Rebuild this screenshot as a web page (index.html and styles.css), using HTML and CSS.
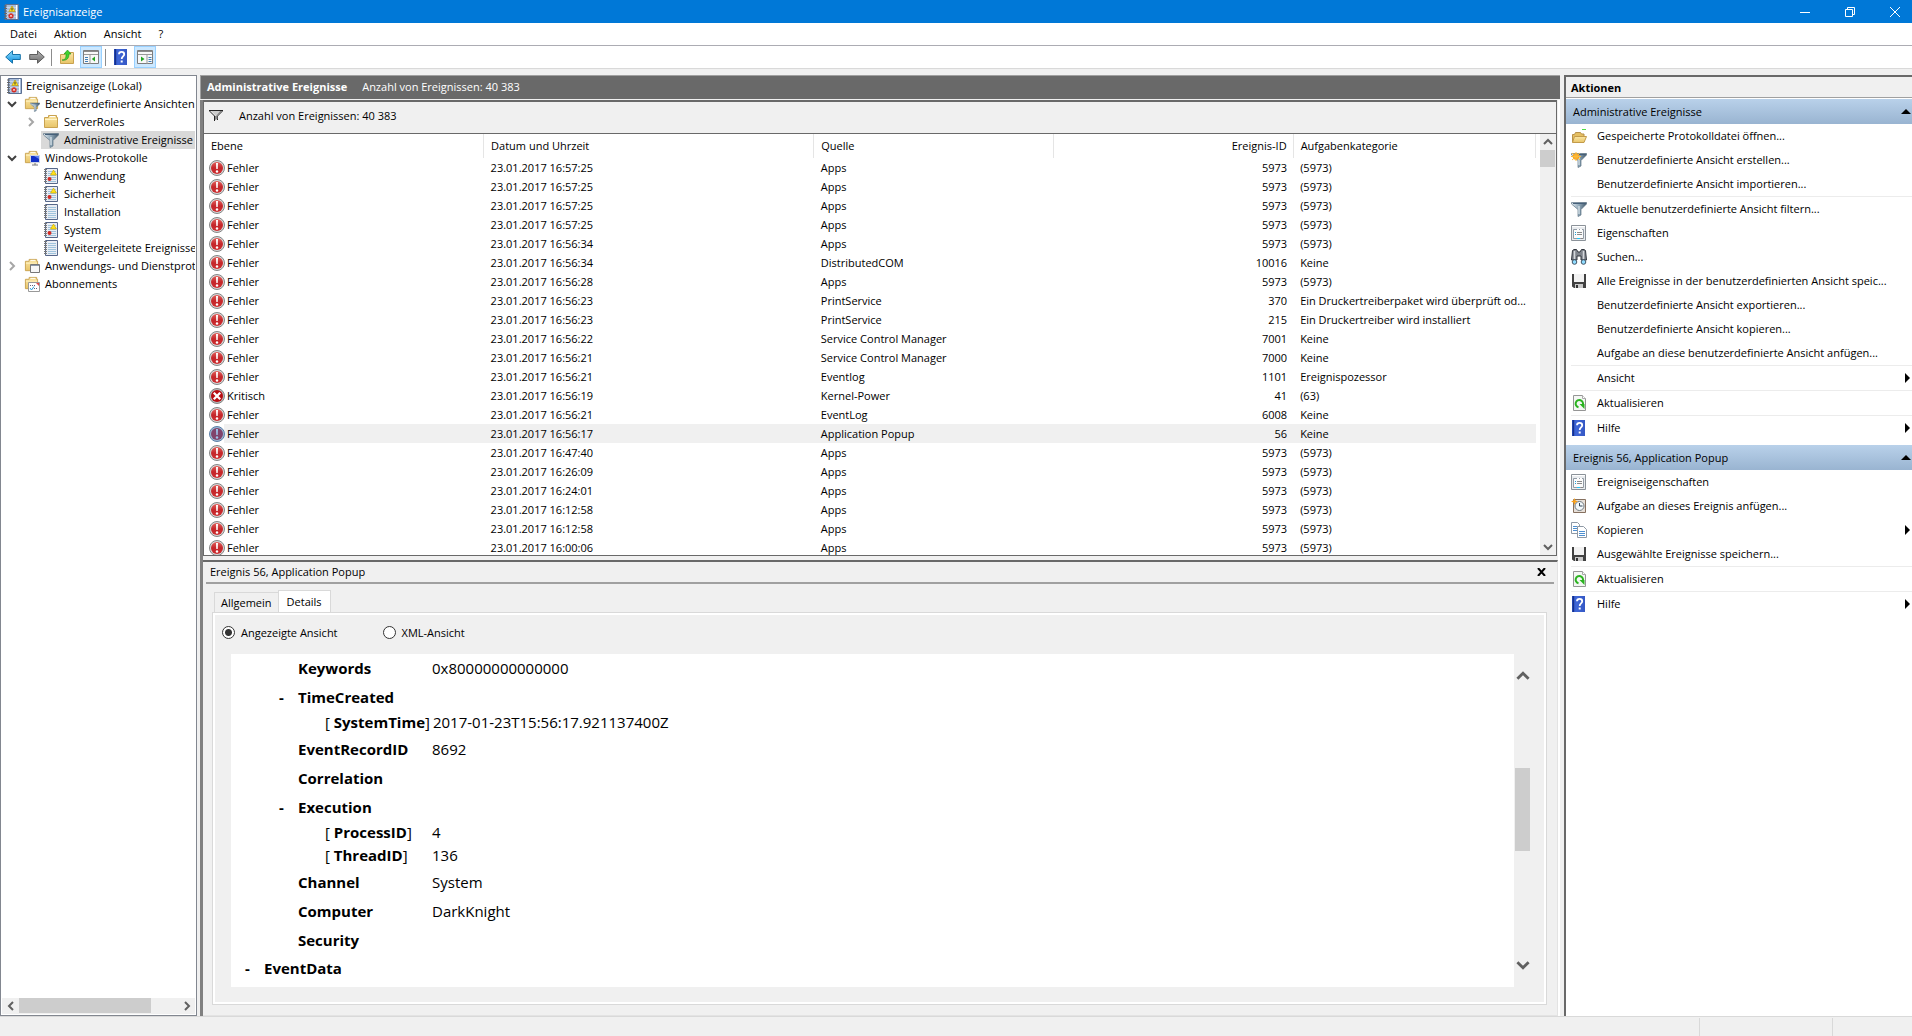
FILE: index.html
```html
<!DOCTYPE html>
<html lang="de">
<head>
	<meta charset="UTF-8">
	<title>Ereignisanzeige</title>
	<link rel="stylesheet" href="styles.css">
	<script src="events.js"></script>
</head>
<body>
	<!-- icons -->
	<svg class="defs" aria-hidden="true">
		<defs>
			<linearGradient id="g-blue" x1="0" y1="0" x2="0" y2="1"><stop offset="0" stop-color="#8fdcfb"/><stop offset="1" stop-color="#0b8ee0"/></linearGradient>
			<linearGradient id="g-grey" x1="0" y1="0" x2="0" y2="1"><stop offset="0" stop-color="#b5b5b5"/><stop offset="1" stop-color="#6e6e6e"/></linearGradient>
			<linearGradient id="g-folder" x1="0" y1="0" x2="0" y2="1"><stop offset="0" stop-color="#fbe7a6"/><stop offset="1" stop-color="#e8c468"/></linearGradient>
			<linearGradient id="g-funnel"><stop offset="0" stop-color="#dfe8ee"/><stop offset=".5" stop-color="#8fa7b8"/><stop offset="1" stop-color="#42586a"/></linearGradient>
			<linearGradient id="g-help"><stop offset="0" stop-color="#1c3fa8"/><stop offset=".3" stop-color="#3f67d8"/><stop offset="1" stop-color="#3558c4"/></linearGradient>
			<linearGradient id="g-red" x1="0" y1="0" x2="0" y2="1"><stop offset="0" stop-color="#e2605c"/><stop offset=".5" stop-color="#c4262a"/><stop offset="1" stop-color="#cf2f31"/></linearGradient>

			<symbol id="i-log" viewBox="0 0 16 16">
				<path d="M2.500 .5h12v15h-12z" fill="#e9edf4" stroke="#56678a"/>
				<path d="M5 3.500h8M5 5.500h8M5 7.500h8M5 9.500h8M5 11.500h8M5 13.500h8" stroke="#9fc3dc"/>
				<path d="M1 1.500h3M1 3.500h3M1 5.500h3M1 7.500h3M1 9.500h3M1 11.500h3M1 13.500h3" stroke="#777"/>
			</symbol>
			<symbol id="i-logx" viewBox="0 0 16 16">
				<use href="#i-log"/>
				<path d="M10.500 2l3 5h-6z" fill="#ffe21a" stroke="#c9a400" stroke-width=".6"/>
				<circle cx="6.500" cy="11" r="2" fill="#d42a22"/>
			</symbol>
			<symbol id="i-app" viewBox="0 0 16 16">
				<path d="M2.500 .5h13v15h-13z" fill="#a9bdd9" stroke="#5b6f92"/>
				<path d="M4 3.500h9M4 6.500h9M4 9.500h9M4 12.500h9" stroke="#c8d6e8"/><path d="M13.500 1v14" stroke="#fff"/>
				<path d="M1 2h3M1 4.500h3M1 7h3M1 9.500h3M1 12h3M1 14.500h3" stroke="#666"/>
				<path d="M9 2l3.200 5.500H5.800z" fill="#ffe21a" stroke="#b08f00" stroke-width=".6"/>
				<path d="M9 3.800v2.700" stroke="#333"/>
				<circle cx="8" cy="11.800" r="2.600" fill="#d42a22"/><path d="M7 10.800l2 2m0-2l-2 2" stroke="#fff" stroke-width=".8"/>
			</symbol>
			<symbol id="i-folder" viewBox="0 0 16 16">
				<path d="M1.500 3.500h4V1.500h8v2h1v10h-13z" fill="url(#g-folder)" stroke="#c9a250"/>
				<path d="M7 2.500h5" stroke="#fff"/><path d="M2 5.500h12" stroke="#fff3c4"/>
			</symbol>
			<symbol id="i-funnel" viewBox="0 0 16 16">
				<path d="M.500 1.500h15v1.500L10 8.500V14l-3 1.500v-7L.500 3z" fill="url(#g-funnel)" stroke="#5d7384" stroke-width=".7"/>
				<path d="M2 2.500h12" stroke="#46607a"/><path d="M8 5v8" stroke="#edf4f8"/>
			</symbol>
			<symbol id="i-ffilter" viewBox="0 0 16 16">
				<svg width="15" height="15" viewBox="0 0 16 16"><use href="#i-folder"/></svg>
				<svg x="6" y="6" width="10" height="10" viewBox="0 0 16 16"><use href="#i-funnel"/></svg>
			</symbol>
			<symbol id="i-fpc" viewBox="0 0 16 16">
				<svg width="15" height="15" viewBox="0 0 16 16"><use href="#i-folder"/></svg>
				<path d="M6.500 5.500h9v7h-9z" fill="#1230c8" stroke="#cfd6e6"/><path d="M10 6h5v3z" fill="#5f82f0"/><path d="M8 15h6M11 13v2" stroke="#777"/>
			</symbol>
			<symbol id="i-fwin" viewBox="0 0 16 16">
				<svg width="15" height="15" viewBox="0 0 16 16"><use href="#i-folder"/></svg>
				<path d="M6.500 6.500h9v8h-9z" fill="#f7f7f7" stroke="#777"/><path d="M7 7.500h8" stroke="#8a97a8"/>
			</symbol>
			<symbol id="i-fsub" viewBox="0 0 16 16">
				<svg width="15" height="15" viewBox="0 0 16 16"><use href="#i-folder"/></svg>
				<path d="M4.500 6.500h11v9h-11z" fill="#fff" stroke="#999"/><path d="M12 7h3v3z" fill="#e3484a"/>
				<path d="M6 9.500h1m1 0h1m1 0h1M10 12.500h1m1 0h1" stroke="#667"/><path d="M6 12l1.500 2L10 10.500" fill="none" stroke="#2aa0dc"/>
			</symbol>
			<symbol id="i-left" viewBox="0 0 16 16"><path d="M.700 8L7.500 1.800v3.700h7.800v5H7.500v3.700z" fill="url(#g-blue)" stroke="#1672a8"/></symbol>
			<symbol id="i-right" viewBox="0 0 16 16"><path d="M15.300 8L8.500 1.800v3.700H.7v5h7.800v3.700z" fill="url(#g-grey)" stroke="#5e5e5e"/></symbol>
			<symbol id="i-up" viewBox="0 0 16 16">
				<path d="M1.500 5.500h4l1-2h8v11h-13z" fill="url(#g-folder)" stroke="#c9a250"/>
				<path d="M3 11c4 0 4-3 4-6H5l3.500-4L12 5h-2c0 4-2 7-7 6z" fill="#3fd12e" stroke="#1f8f18" stroke-width=".6"/>
			</symbol>
			<symbol id="i-pane" viewBox="0 0 16 14">
				<path d="M.500 .500h15v13H.500z" fill="#f8f8f8" stroke="#7d7d7d"/><path d="M1 1.500h14" stroke="#8b8b8b"/><path d="M1 4.500h14M7 5v9" stroke="#999"/>
				<path d="M2 7.500h3M2 9.500h3M2 11.500h3" stroke="#3f7fb8"/><path d="M12 6.500v5L8.800 9z" fill="#23a523"/>
			</symbol>
			<symbol id="i-pane2" viewBox="0 0 16 14">
				<path d="M.500 .500h15v13H.500z" fill="#f8f8f8" stroke="#7d7d7d"/><path d="M1 1.500h14" stroke="#8b8b8b"/><path d="M1 4.500h14M10 5v9" stroke="#999"/>
				<path d="M11.500 7.500h3M11.500 9.500h3M11.500 11.500h3" stroke="#3f7fb8"/><path d="M4 6.500v5L7.500 9z" fill="#23a523"/>
			</symbol>
			<symbol id="i-help" viewBox="0 0 16 16">
				<path d="M1 0h13v16H1z" fill="url(#g-help)"/><path d="M2.500 0v16" stroke="#17308a"/>
				<path d="M6 5.200C6 2 11.200 2 11.200 5.200 11.200 7.500 8.700 7.400 8.700 10" fill="none" stroke="#fff" stroke-width="1.800"/><path d="M7.700 11.500h2v2h-2z" fill="#fff"/>
			</symbol>
			<symbol id="i-error" viewBox="0 0 16 16">
				<circle cx="8" cy="8" r="7.500" fill="#d8d8d8" stroke="#858585"/><circle cx="8" cy="8" r="6" fill="url(#g-red)"/>
				<path d="M7 3h2l-.3 6H7.300z" fill="#fff"/><circle cx="8" cy="11.500" r="1.200" fill="#fff"/>
			</symbol>
			<symbol id="i-errorsel" viewBox="0 0 16 16">
				<circle cx="8" cy="8" r="7.500" fill="#9db9d4" stroke="#5c7ea6"/><circle cx="8" cy="8" r="6" fill="#80436b"/>
				<path d="M7 3h2l-.3 6H7.300z" fill="#9ec4ea"/><circle cx="8" cy="11.500" r="1.200" fill="#9ec4ea"/>
			</symbol>
			<symbol id="i-critical" viewBox="0 0 16 16">
				<circle cx="8" cy="8" r="7.500" fill="#b9b9b9" stroke="#858585"/><circle cx="8" cy="8" r="6" fill="#b80d12"/>
				<path d="M4.800 4.800l6.400 6.400m0-6.400l-6.400 6.400" stroke="#fff" stroke-width="2.300"/>
			</symbol>
			<symbol id="i-open" viewBox="0 0 16 16">
				<path d="M1.500 14V6.500h2l1-2h5l1 1.500h2.500V14z" fill="#e5bf62" stroke="#b8914a"/><path d="M3.500 8.500h12L13 14.500H1.500z" fill="url(#g-folder)" stroke="#c39b4a"/><path d="M11 1.500h4" stroke="#4fdc45"/>
			</symbol>
			<symbol id="i-funnelnew" viewBox="0 0 16 16"><use href="#i-funnel"/><circle cx="5" cy="4.500" r="3.300" fill="#f9a11b"/><path d="M1 1l8 7M9 1L1 8M5 0v9M0 4.500h10" stroke="#fbbc3c"/></symbol>
			<symbol id="i-props" viewBox="0 0 16 16">
				<path d="M.500 .500h14v15H.500z" fill="#e9ecef" stroke="#8b9299"/><path d="M1 1.500h13" stroke="#fff"/><path d="M2.500 4.500h10v9h-10z" fill="#fbfbfb" stroke="#929ba5"/>
				<path d="M6 4.500h2m1 0h2" stroke="#fff"/><path d="M4 7.500h1M4 9.500h1" stroke="#23a0d8"/><path d="M6 7.500h5M6 9.500h5" stroke="#8a8a8a"/><path d="M6 13.500h3" stroke="#22c3f5"/><path d="M10 13.500h2" stroke="#888"/>
			</symbol>
			<symbol id="i-find" viewBox="0 0 16 16">
				<path d="M1.500 1.500L3 .5h2.500L7 3h2L10.500.5H13l1.500 1L15.500 11H10V7H6v4H.5z" fill="#7f848c" stroke="#33373f"/><path d="M3.500 2v8M12.500 2v8" stroke="#d5d8dc" stroke-width="1.500"/>
				<circle cx="3.500" cy="13" r="2.300" fill="#8fdcff" stroke="#456"/><circle cx="12.500" cy="13" r="2.300" fill="#8fdcff" stroke="#456"/>
			</symbol>
			<symbol id="i-save" viewBox="0 0 16 16">
				<path d="M1 1h14v14H3l-2-1.500z" fill="#414141"/><path d="M3 1h10v8H3z" fill="#f2f2f2"/><path d="M4 11h8v4H4z" fill="#c9c9c9"/><path d="M5 12h2v3H5z" fill="#333"/>
			</symbol>
			<symbol id="i-refresh" viewBox="0 0 16 16">
				<path d="M2.500 .500h9l3 3v12h-12z" fill="#f4f7f4" stroke="#959595"/><path d="M11.500 .500v3h3" fill="#fff" stroke="#aaa"/>
				<path d="M7.500 12.300A3.700 3.700 0 1 1 11.800 10" fill="none" stroke="#2bb320" stroke-width="2"/><path d="M8.500 9h5v5z" fill="#2bb320"/>
			</symbol>
			<symbol id="i-task" viewBox="0 0 16 16">
				<path d="M2.500 1.500h12v13h-12z" fill="#e6dfd8" stroke="#86705f"/><circle cx="8.500" cy="8" r="4.500" fill="#f2f8fb" stroke="#71797f"/><path d="M8.500 5v3h3" fill="none" stroke="#345"/>
				<path d="M3.500 0l1 2.500L7 3.500l-2.500 1-1 2.500-1-2.500L0 3.500l2.500-1z" fill="#f9a11b"/>
			</symbol>
			<symbol id="i-copy" viewBox="0 0 16 16">
				<path d="M.500 .500h6l2 2v9h-8z" fill="#fff" stroke="#8e99a5"/><path d="M2 4.500h4M2 6.500h4M2 8.500h4" stroke="#4d8fd0"/>
				<path d="M6.500 4.500h6l3 3v8h-9z" fill="#fff" stroke="#8e99a5"/><path d="M8 9.500h6M8 11.500h6M8 13.500h6" stroke="#4d8fd0"/>
			</symbol>
			<symbol id="i-smallfunnel" viewBox="0 0 16 16"><path d="M1 2.500h14M1.500 3l5 5v5M14.500 3l-5 5v4" fill="none" stroke="#222"/><path d="M3 3h9L8 8z" fill="#ccc"/><path d="M8 8l4-5h2L9.500 8v3L7 12V8z" fill="#888"/></symbol>
			<symbol id="i-down" viewBox="0 0 10 10"><path d="M1 3l4 4 4-4" fill="none" stroke="currentColor" stroke-width="2"/></symbol>
			<symbol id="i-next" viewBox="0 0 10 10"><path d="M3 1l4 4-4 4" fill="none" stroke="currentColor" stroke-width="2"/></symbol>
			<symbol id="i-prev" viewBox="0 0 10 10"><path d="M7 1L3 5l4 4" fill="none" stroke="currentColor" stroke-width="2"/></symbol>
			<symbol id="i-top" viewBox="0 0 10 10"><path d="M1 7l4-4 4 4" fill="none" stroke="currentColor" stroke-width="2"/></symbol>
		</defs>
	</svg>

	<header class="titlebar">
		<svg class="icon"><use href="#i-app"/></svg>
		<span class="title">Ereignisanzeige</span>
		<button aria-label="Minimieren"><svg width="10" height="10"><path d="M0 5.500h10" stroke="#fff"/></svg></button>
		<button aria-label="Verkleinern"><svg width="10" height="10" fill="none" stroke="#fff"><path d="M.5 2.500h7v7h-7zM2.500 2V.5h7v7H8"/></svg></button>
		<button aria-label="Schließen"><svg width="10" height="10"><path d="M0 0l10 10M10 0L0 10" stroke="#fff"/></svg></button>
	</header>

	<nav class="menu">
		<button>Datei</button>
		<button>Aktion</button>
		<button>Ansicht</button>
		<button>?</button>
	</nav>

	<div class="toolbar">
		<button aria-label="Zurück"><svg class="icon"><use href="#i-left"/></svg></button>
		<button aria-label="Vorwärts"><svg class="icon"><use href="#i-right"/></svg></button>
		<i class="sep"></i>
		<button aria-label="Eine Ebene höher"><svg class="icon"><use href="#i-up"/></svg></button>
		<button class="on" aria-label="Konsolenstruktur"><svg class="icon"><use href="#i-pane"/></svg></button>
		<i class="sep"></i>
		<button aria-label="Hilfe"><svg class="icon"><use href="#i-help"/></svg></button>
		<button class="on" aria-label="Aktionsbereich"><svg class="icon"><use href="#i-pane2"/></svg></button>
	</div>

	<main class="main">
		<aside class="tree">
			<ul>
				<li class="root"><svg class="icon"><use href="#i-app"/></svg>Ereignisanzeige (Lokal)</li>
				<li class="l1"><svg class="chev"><use href="#i-down"/></svg><svg class="icon"><use href="#i-ffilter"/></svg>Benutzerdefinierte Ansichten</li>
				<li class="l2"><svg class="chev closed"><use href="#i-next"/></svg><svg class="icon"><use href="#i-folder"/></svg>ServerRoles</li>
				<li class="l2 leaf selected"><svg class="icon"><use href="#i-funnel"/></svg>Administrative Ereignisse</li>
				<li class="l1"><svg class="chev"><use href="#i-down"/></svg><svg class="icon"><use href="#i-fpc"/></svg>Windows-Protokolle</li>
				<li class="l2 leaf"><svg class="icon"><use href="#i-logx"/></svg>Anwendung</li>
				<li class="l2 leaf"><svg class="icon"><use href="#i-logx"/></svg>Sicherheit</li>
				<li class="l2 leaf"><svg class="icon"><use href="#i-log"/></svg>Installation</li>
				<li class="l2 leaf"><svg class="icon"><use href="#i-logx"/></svg>System</li>
				<li class="l2 leaf"><svg class="icon"><use href="#i-log"/></svg>Weitergeleitete Ereignisse</li>
				<li class="l1"><svg class="chev closed"><use href="#i-next"/></svg><svg class="icon"><use href="#i-fwin"/></svg>Anwendungs- und Dienstprotokolle</li>
				<li class="l1 leaf"><svg class="icon"><use href="#i-fsub"/></svg>Abonnements</li>
			</ul>
			<div class="hscroll">
				<button aria-label="Nach links"><svg class="chev"><use href="#i-prev"/></svg></button>
				<div class="track"><div class="thumb"></div></div>
				<button aria-label="Nach rechts"><svg class="chev"><use href="#i-next"/></svg></button>
			</div>
		</aside>

		<section class="center">
			<h1 class="caption"><b>Administrative Ereignisse</b><span>Anzahl von Ereignissen: 40 383</span></h1>
			<div class="frame">
				<div class="list">
					<div class="filter"><svg class="icon"><use href="#i-smallfunnel"/></svg>Anzahl von Ereignissen: 40 383</div>
					<div class="grid">
						<div class="rows">
							<table>
								<colgroup><col class="c-level"><col class="c-date"><col class="c-source"><col class="c-id"><col></colgroup>
								<thead>
									<tr><th>Ebene</th><th>Datum und Uhrzeit</th><th>Quelle</th><th class="num">Ereignis-ID</th><th>Aufgabenkategorie</th></tr>
								</thead>
								<tbody id="events"></tbody>
							</table>
						</div>
						<div class="vscroll">
							<button aria-label="Nach oben"><svg class="chev"><use href="#i-top"/></svg></button>
							<div class="track"><div class="thumb"></div></div>
							<button aria-label="Nach unten"><svg class="chev"><use href="#i-down"/></svg></button>
						</div>
					</div>
				</div>

				<div class="detail">
					<div class="detail-head">
						<h2>Ereignis 56, Application Popup</h2>
						<button aria-label="Schließen"><svg width="9" height="8"><path d="M1 0l7 8M8 0L1 8" stroke="#000" stroke-width="2"/></svg></button>
					</div>
					<div class="tabs">
						<button>Allgemein</button>
						<button class="active">Details</button>
					</div>
					<div class="tabpage">
						<div class="radios">
							<label><input type="radio" name="view" checked>Angezeigte Ansicht</label>
							<label><input type="radio" name="view">XML-Ansicht</label>
						</div>
						<div class="viewer">
							<dl class="props">
								<div><dt>Keywords</dt><dd>0x80000000000000</dd></div>
								<div class="open"><dt>TimeCreated</dt></div>
								<div class="attr"><dt>[ <b>SystemTime</b>]</dt><dd>2017-01-23T15:56:17.921137400Z</dd></div>
								<div><dt>EventRecordID</dt><dd>8692</dd></div>
								<div><dt>Correlation</dt></div>
								<div class="open"><dt>Execution</dt></div>
								<div class="attr"><dt>[ <b>ProcessID</b>]</dt><dd>4</dd></div>
								<div class="attr"><dt>[ <b>ThreadID</b>]</dt><dd>136</dd></div>
								<div><dt>Channel</dt><dd>System</dd></div>
								<div><dt>Computer</dt><dd>DarkKnight</dd></div>
								<div><dt>Security</dt></div>
								<div class="open section"><dt>EventData</dt></div>
							</dl>
							<div class="vscroll big">
								<button aria-label="Nach oben"><svg class="chev"><use href="#i-top"/></svg></button>
								<div class="track"><div class="thumb"></div></div>
								<button aria-label="Nach unten"><svg class="chev"><use href="#i-down"/></svg></button>
							</div>
						</div>
					</div>
				</div>
			</div>
		</section>

		<aside class="actions">
			<h2>Aktionen</h2>
			<h3>Administrative Ereignisse<i class="tri-up"></i></h3>
			<button><svg class="icon"><use href="#i-open"/></svg><span>Gespeicherte Protokolldatei öffnen...</span></button>
			<button><svg class="icon"><use href="#i-funnelnew"/></svg><span>Benutzerdefinierte Ansicht erstellen...</span></button>
			<button><svg class="icon"></svg><span>Benutzerdefinierte Ansicht importieren...</span></button>
			<hr>
			<button><svg class="icon"><use href="#i-funnel"/></svg><span>Aktuelle benutzerdefinierte Ansicht filtern...</span></button>
			<button><svg class="icon"><use href="#i-props"/></svg><span>Eigenschaften</span></button>
			<button><svg class="icon"><use href="#i-find"/></svg><span>Suchen...</span></button>
			<button><svg class="icon"><use href="#i-save"/></svg><span>Alle Ereignisse in der benutzerdefinierten Ansicht speic...</span></button>
			<button><svg class="icon"></svg><span>Benutzerdefinierte Ansicht exportieren...</span></button>
			<button><svg class="icon"></svg><span>Benutzerdefinierte Ansicht kopieren...</span></button>
			<button><svg class="icon"></svg><span>Aufgabe an diese benutzerdefinierte Ansicht anfügen...</span></button>
			<hr>
			<button><svg class="icon"></svg><span>Ansicht</span><i class="tri"></i></button>
			<hr>
			<button><svg class="icon"><use href="#i-refresh"/></svg><span>Aktualisieren</span></button>
			<hr>
			<button><svg class="icon"><use href="#i-help"/></svg><span>Hilfe</span><i class="tri"></i></button>
			<h3 class="second">Ereignis 56, Application Popup<i class="tri-up"></i></h3>
			<button><svg class="icon"><use href="#i-props"/></svg><span>Ereigniseigenschaften</span></button>
			<button><svg class="icon"><use href="#i-task"/></svg><span>Aufgabe an dieses Ereignis anfügen...</span></button>
			<button><svg class="icon"><use href="#i-copy"/></svg><span>Kopieren</span><i class="tri"></i></button>
			<button><svg class="icon"><use href="#i-save"/></svg><span>Ausgewählte Ereignisse speichern...</span></button>
			<hr>
			<button><svg class="icon"><use href="#i-refresh"/></svg><span>Aktualisieren</span></button>
			<hr>
			<button><svg class="icon"><use href="#i-help"/></svg><span>Hilfe</span><i class="tri"></i></button>
		</aside>
	</main>

	<footer class="status"><span></span><span></span></footer>
</body>
</html>
```
FILE: styles.css
```css
*{box-sizing:border-box;}
body{margin:0;height:100vh;display:flex;flex-direction:column;background:#f0f0f0;color:#000;font:11px/18px "Open Sans","Noto Sans",sans-serif;overflow:hidden;}
ul,dl,dd,h1,h2,h3{margin:0;padding:0;font-size:inherit;font-weight:normal;}
ul{list-style:none;}
button{margin:0;padding:0;border:0;background:none;color:inherit;font:inherit;}
svg{display:block;flex:none;}
.defs{position:absolute;width:0;height:0;}
.icon{width:16px;height:16px;}
.chev{width:10px;height:10px;color:#404040;}
.chev.closed{color:#a6a6a6;}

/* title, menu, toolbar */
.titlebar{display:flex;align-items:center;height:23px;padding-left:3px;background:#0078d7;color:#fff;}
.titlebar .title{flex:1;padding-left:4px;}
.titlebar button{display:flex;align-items:center;justify-content:center;width:45px;height:21px;padding-left:11px;}
.menu{display:flex;gap:17px;height:23px;padding:0 10px;border-bottom:1px solid #acacb3;background:#fff;line-height:22px;}
.toolbar{display:flex;align-items:center;height:23px;padding:0 2px;border-bottom:1px solid #d9d9d9;background:#fff;}
.toolbar button{display:flex;align-items:center;justify-content:center;width:22px;height:22px;border:1px solid transparent;}
.toolbar button.on{background:#cce8ff;border-color:#99d1ff;}
.toolbar button:nth-of-type(n+2){margin-left:2px;}
.toolbar .sep{width:1px;height:17px;margin:0 2px 0 3px;background:#8c8c8c;}

.main{flex:1;min-height:0;display:flex;padding-top:6px;}

/* console tree */
.tree{flex:none;display:flex;flex-direction:column;width:197px;border:1px solid #828790;background:#fff;padding:1px;}
.tree ul{flex:1;overflow:hidden;}
.tree li{display:flex;align-items:center;height:18px;white-space:nowrap;}
.tree li .icon{margin-right:5px;}
.tree .root{padding-left:4px;}
.tree .root .icon{margin-right:4px;}
.tree .l1{padding-left:5px;}
.tree .l2{padding-left:24px;}
.tree li .chev{margin-right:7px;}
.tree .l1.leaf{padding-left:22px;}
.tree .l2.leaf{padding-left:2px;margin-left:39px;}
.tree .selected{background:#d9d9d9;}
.hscroll{display:flex;height:16px;background:#f0f0f0;}
.hscroll button,.vscroll button{display:flex;align-items:center;justify-content:center;width:17px;height:16px;}
.hscroll .chev,.vscroll .chev{color:#606060;}
.hscroll .track{flex:1;}
.hscroll .thumb{width:83%;height:15px;background:#cdcdcd;}

/* event list */
.center{flex:1;min-width:0;display:flex;flex-direction:column;margin:0 4px 0 3px;}
.caption{height:24px;padding:2px 6px;border-top:1px solid #a0a0a0;border-left:1px solid #a0a0a0;background:#696969;color:#fff;line-height:18px;}
.caption span{margin-left:15px;}
.frame{flex:1;min-height:0;display:flex;flex-direction:column;margin-top:1px;border-left:3px solid #808080;border-right:2px solid #fff;}
.list,.detail{flex:1 1 0;min-height:0;display:flex;flex-direction:column;}
.list{border:2px solid #696969;border-width:2px 1px 1px;margin-right:1px;}
.filter{display:flex;align-items:center;height:31px;padding:0 0 4px 4px;}
.filter .icon{margin-right:15px;}
.grid{flex:1;min-height:0;display:flex;border-top:1px solid #696969;background:#fff;}
.rows{flex:1;overflow:hidden;}
table{width:100%;table-layout:fixed;border-collapse:collapse;}
.c-level{width:21%;}
.c-date{width:24.8%;}
.c-source,.c-id{width:18%;}
th,td{padding:0 6px 0 7px;font-weight:normal;text-align:left;white-space:nowrap;overflow:hidden;text-overflow:ellipsis;}
th{height:24px;border-right:1px solid #e5e5e5;}
td{height:19px;line-height:19px;}
td:first-child{padding-left:5px;}
.num{text-align:right;}
.level{display:flex;align-items:center;height:19px;}
.level .icon{margin-right:2px;}
.selected-row td{background:#f0f0f0;}
.selected-row td:first-child{background:linear-gradient(to right,#fff 20px,#f0f0f0 20px);}
.vscroll{display:flex;flex-direction:column;flex:none;width:20px;padding:0 1px 0 4px;background:linear-gradient(to right,#fff 4px,#f0f0f0 4px);}
.vscroll button{width:15px;}
.vscroll .track{flex:1;}
.vscroll .thumb{height:17px;background:#cdcdcd;}

/* preview pane */
.detail{margin-top:4px;border-top:2px solid #696969;border-right:1px solid #e3e3e3;border-bottom:1px solid #e3e3e3;}
.detail-head{display:flex;align-items:center;height:22px;margin:0 3px;padding:0 6px 0 4px;border-bottom:2px solid #a0a0a0;}
.detail-head h2{flex:1;}
.detail-head button{display:flex;padding:2px;}
.tabs{display:flex;align-items:flex-end;height:28px;padding-left:11px;}
.tabs button{height:20px;padding:0 6px;border:1px solid #d9d9d9;border-bottom:0;line-height:19px;}
.tabs .active{height:22px;margin:0 0 0 -1px;padding:0 8px;background:#fff;}
.tabpage{flex:1;min-height:0;display:flex;flex-direction:column;margin:0 10px 10px 9px;border:1px solid #d9d9d9;box-shadow:inset 0 0 0 2px #fff;}
.radios{display:flex;gap:45px;padding:10px 0 12px 9px;}
.radios label{display:flex;align-items:center;height:19px;}
.radios input{appearance:none;width:13px;height:13px;margin:0 6px 0 0;border:1px solid #333;border-radius:50%;background:#fff;}
.radios input:checked{background:radial-gradient(#333 0 3px,#fff 4px);}
.viewer{flex:1;min-height:0;display:flex;margin:0 0 17px 18px;}
.props{flex:1;overflow:hidden;background:#fff;font-size:15px;line-height:29px;}
.props div{display:flex;height:29px;padding-left:67px;}
.props dt{flex:none;width:134px;font-weight:bold;white-space:nowrap;}
.props .attr{height:23px;padding-left:94px;line-height:21px;}
.props .attr dt{width:auto;min-width:107px;padding-right:3px;font-weight:normal;}
.props .open{padding-left:48px;}
.props .open::before{content:"-";width:19px;font-weight:bold;}
.props .section{padding-left:14px;line-height:27px;}
.vscroll.big{width:16px;margin-right:16px;padding:14px 0 14px 1px;background:none;}
.vscroll.big .chev{width:14px;height:14px;}
.vscroll.big .thumb{height:83px;margin-top:84px;}

/* action pane */
.actions{flex:none;width:348px;border-left:2px solid #696969;border-top:2px solid #696969;background:#fff;}
.actions h2{height:21px;padding:0 5px;border-bottom:1px solid #a0a0a0;background:#f0f0f0;font-weight:bold;line-height:21px;}
.actions h3{display:flex;align-items:center;height:25px;margin-top:1px;padding:0 1px 0 7px;background:linear-gradient(#b9d1ea,#99b4d1);}
.actions h3.second{margin-top:5px;}
.actions button{display:flex;align-items:center;width:100%;height:24px;padding:0 2px 0 5px;text-align:left;}
.actions .icon{margin-right:10px;}
.actions span{flex:1;white-space:nowrap;}
.actions hr{height:1px;margin:0 0 0 5px;border:0;background:#ececec;}
.tri{border:5px solid transparent;border-left-color:#000;border-right-width:0;}
.tri-up{margin-left:auto;border:5px solid transparent;border-bottom-color:#000;border-top-width:0;}

/* status bar */
.status{display:flex;justify-content:flex-end;height:20px;padding-top:1px;border-top:1px solid #d9d9d9;}
.status span{width:133px;border-left:1px solid #d9d9d9;}
.status span:last-child{width:80px;}
```
FILE: events.js
```js
document.addEventListener('DOMContentLoaded',function(){
	var events = [
		['Fehler','23.01.2017 16:57:25','Apps','5973','(5973)'],
		['Fehler','23.01.2017 16:57:25','Apps','5973','(5973)'],
		['Fehler','23.01.2017 16:57:25','Apps','5973','(5973)'],
		['Fehler','23.01.2017 16:57:25','Apps','5973','(5973)'],
		['Fehler','23.01.2017 16:56:34','Apps','5973','(5973)'],
		['Fehler','23.01.2017 16:56:34','DistributedCOM','10016','Keine'],
		['Fehler','23.01.2017 16:56:28','Apps','5973','(5973)'],
		['Fehler','23.01.2017 16:56:23','PrintService','370','Ein Druckertreiberpaket wird überprüft od...'],
		['Fehler','23.01.2017 16:56:23','PrintService','215','Ein Druckertreiber wird installiert'],
		['Fehler','23.01.2017 16:56:22','Service Control Manager','7001','Keine'],
		['Fehler','23.01.2017 16:56:21','Service Control Manager','7000','Keine'],
		['Fehler','23.01.2017 16:56:21','Eventlog','1101','Ereignispozessor'],
		['Kritisch','23.01.2017 16:56:19','Kernel-Power','41','(63)'],
		['Fehler','23.01.2017 16:56:21','EventLog','6008','Keine'],
		['Fehler','23.01.2017 16:56:17','Application Popup','56','Keine'],
		['Fehler','23.01.2017 16:47:40','Apps','5973','(5973)'],
		['Fehler','23.01.2017 16:26:09','Apps','5973','(5973)'],
		['Fehler','23.01.2017 16:24:01','Apps','5973','(5973)'],
		['Fehler','23.01.2017 16:12:58','Apps','5973','(5973)'],
		['Fehler','23.01.2017 16:12:58','Apps','5973','(5973)'],
		['Fehler','23.01.2017 16:00:06','Apps','5973','(5973)']
	];
	var tbody = document.getElementById('events');

	// 14 = ausgewähltes Ereignis
	var selected = 14;

	for(var i=0;i<events.length;i++){
		var e = events[i];
		var icon = e[0] === 'Kritisch' ? 'critical' : 'error';
		var tr = document.createElement('tr');

		if(i===selected){
			icon = 'errorsel';
			tr.className = 'selected-row';
		}

		tr.innerHTML = '<td><div class="level"><svg class="icon"><use href="#i-' + icon + '"/></svg>' + e[0] + '</div></td>'
			+ '<td>' + e[1] + '</td><td>' + e[2] + '</td><td class="num">' + e[3] + '</td><td>' + e[4] + '</td>';
		tbody.appendChild(tr);
	}
});
```
